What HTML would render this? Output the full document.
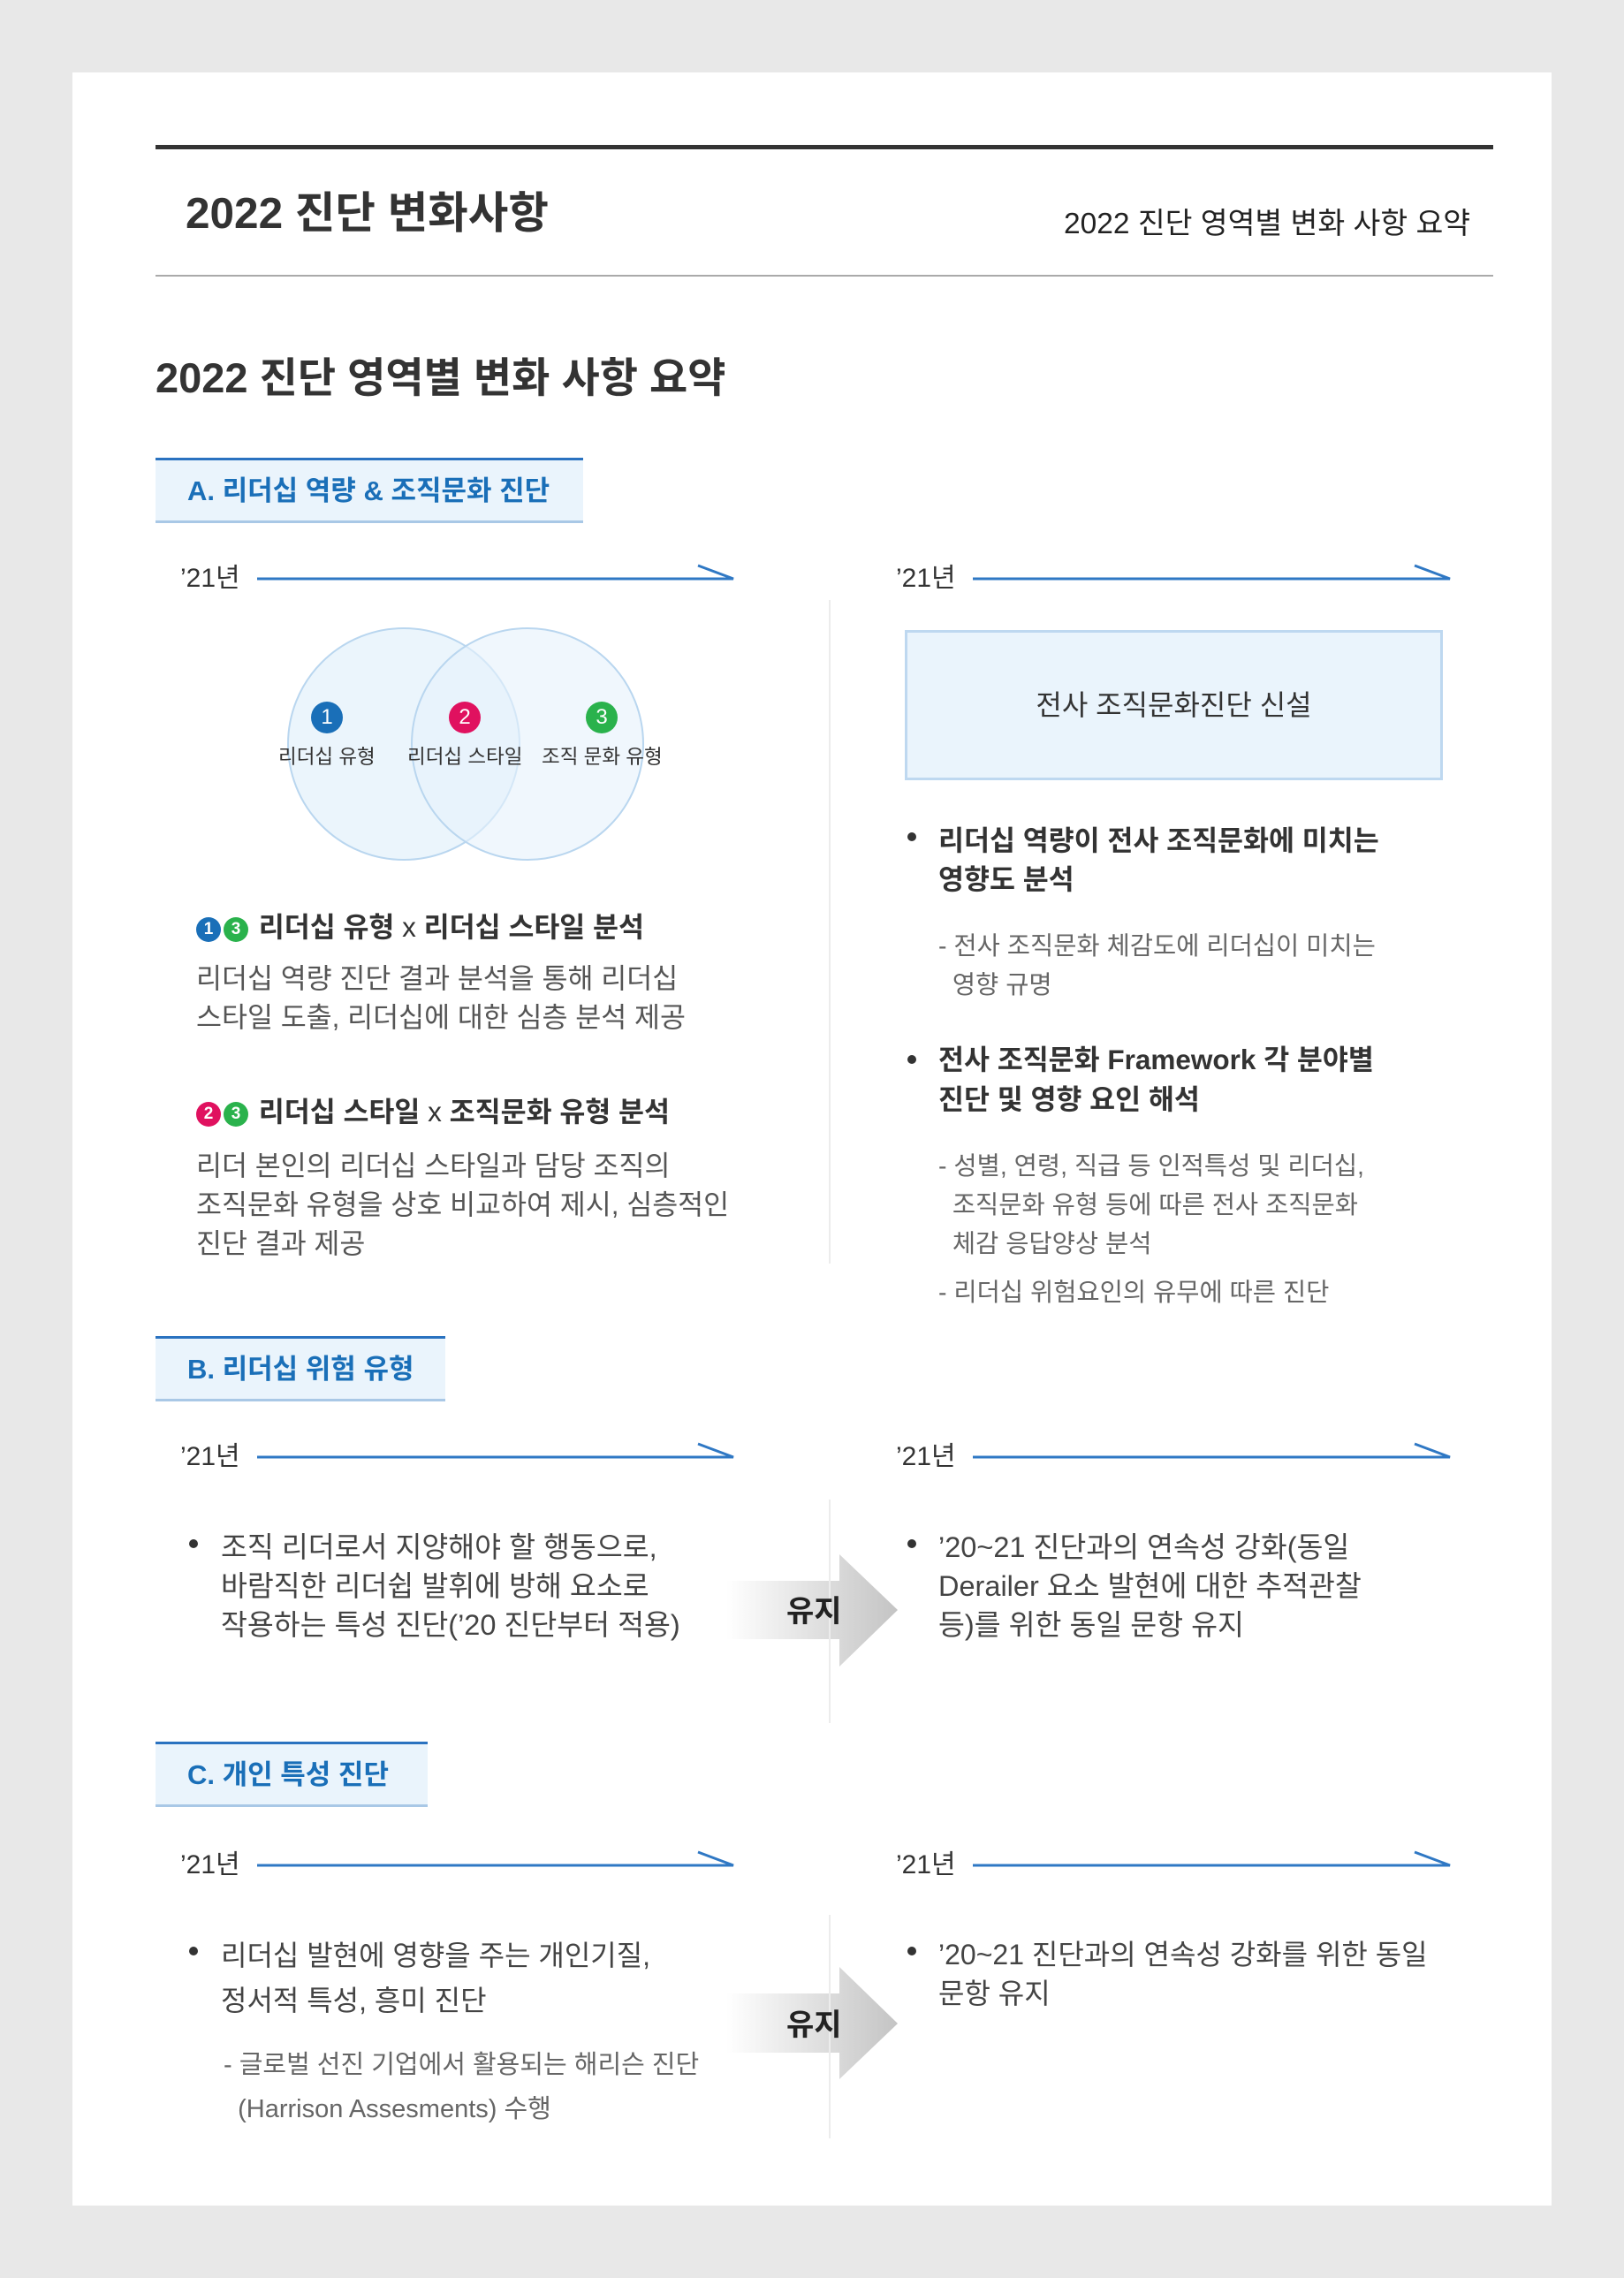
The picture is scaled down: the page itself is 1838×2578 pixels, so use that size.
<!DOCTYPE html>
<html><head><meta charset="utf-8">
<style>
*{margin:0;padding:0;box-sizing:border-box}
body{width:1838px;height:2578px;background:#e8e8e8;position:relative;overflow:hidden;font-family:"Liberation Sans","Noto Sans CJK KR",sans-serif;color:#333}
.card{position:absolute;left:82px;top:82px;width:1674px;height:2414px;background:#fff}
.a{position:absolute;white-space:nowrap}
.lab{position:absolute;left:176px;height:74px;background:#eaf4fc;border-top:3px solid #2a72c0;border-bottom:3px solid #a9c8e6;color:#1a6fb8;font-weight:bold;font-size:31px;line-height:70px;padding-left:36px}
.yr{position:absolute;font-size:30px;line-height:40px;color:#333}
.vd{position:absolute;left:938px;width:2px;background:#ececec}
.p{font-size:31.5px;color:#555;line-height:44px}
.h{font-size:31.5px;font-weight:bold;color:#333}
.s{font-size:28.5px;color:#666}
.dot{position:absolute;width:10px;height:10px;border-radius:50%;background:#333}
.badge{display:inline-block;width:28px;height:28px;border-radius:50%;color:#fff;font-size:19px;line-height:28px;text-align:center;font-weight:bold;vertical-align:3px;margin-right:3px}
</style></head><body>
<div class="card"></div>
<div class="a" style="left:176px;top:164px;width:1514px;height:5px;background:#333"></div>
<div class="a" style="left:210px;top:212px;font-size:49.5px;font-weight:bold;line-height:60px;color:#333">2022 진단 변화사항</div>
<div class="a" style="left:1204px;top:234px;font-size:33.5px;line-height:40px;color:#222">2022 진단 영역별 변화 사항 요약</div>
<div class="a" style="left:176px;top:311px;width:1514px;height:2px;background:#aaa"></div>
<div class="a" style="left:176px;top:398px;font-size:47px;font-weight:bold;line-height:60px;color:#333">2022 진단 영역별 변화 사항 요약</div>

<div class="lab" style="top:518px;width:484px">A. 리더십 역량 &amp; 조직문화 진단</div>
<div class="lab" style="top:1512px;width:328px">B. 리더십 위험 유형</div>
<div class="lab" style="top:1971px;width:308px">C. 개인 특성 진단</div>

<svg class="a" style="left:0;top:0" width="1838" height="2578">
<g stroke="#2f78c4" stroke-width="3" fill="none">
<path d="M291 655H830L790 640"/><path d="M1101 655H1641L1601 640"/>
<path d="M291 1649H830L790 1634"/><path d="M1101 1649H1641L1601 1634"/>
<path d="M291 2111H830L790 2096"/><path d="M1101 2111H1641L1601 2096"/>
</g>
<circle cx="457" cy="842" r="131" fill="#e6f2fb" fill-opacity="0.8" stroke="#b9d6ef" stroke-width="2"/>
<circle cx="597" cy="842" r="131" fill="#e6f2fb" fill-opacity="0.6" stroke="#b9d6ef" stroke-width="2"/>
<defs><linearGradient id="g" x1="0" x2="1"><stop offset="0" stop-color="#fff"/><stop offset="1" stop-color="#c4c4c4"/></linearGradient></defs>
<path d="M822 1789H950V1759L1016 1822L950 1886V1855H822Z" fill="url(#g)"/>
<path d="M822 2256H950V2226L1016 2290L950 2353V2323H822Z" fill="url(#g)"/>
</svg>

<div class="yr" style="left:204px;top:635px">’21년</div>
<div class="yr" style="left:1014px;top:635px">’21년</div>
<div class="yr" style="left:204px;top:1629px">’21년</div>
<div class="yr" style="left:1014px;top:1629px">’21년</div>
<div class="yr" style="left:204px;top:2091px">’21년</div>
<div class="yr" style="left:1014px;top:2091px">’21년</div>

<div class="vd" style="top:679px;height:751px"></div>
<div class="vd" style="top:1697px;height:253px"></div>
<div class="vd" style="top:2167px;height:253px"></div>

<div class="a" style="left:352px;top:794px;width:36px;height:36px;border-radius:50%;background:#1a6fb8;color:#fff;font-size:24px;line-height:36px;text-align:center">1</div>
<div class="a" style="left:508px;top:794px;width:36px;height:36px;border-radius:50%;background:#e0115f;color:#fff;font-size:24px;line-height:36px;text-align:center">2</div>
<div class="a" style="left:663px;top:794px;width:36px;height:36px;border-radius:50%;background:#2ab24c;color:#fff;font-size:24px;line-height:36px;text-align:center">3</div>
<div class="a" style="left:315px;top:842px;font-size:22.5px;line-height:30px">리더십 유형</div>
<div class="a" style="left:461px;top:842px;font-size:22.5px;line-height:30px">리더십 스타일</div>
<div class="a" style="left:613px;top:842px;font-size:22.5px;line-height:30px">조직 문화 유형</div>

<div class="a" style="left:1024px;top:713px;width:609px;height:170px;background:#eaf4fc;border:3px solid #bed8f0;font-size:32px;line-height:164px;text-align:center;color:#333">전사 조직문화진단 신설</div>

<div class="a h" style="left:222px;top:1028px;line-height:42px"><span class="badge" style="background:#1a6fb8">1</span><span class="badge" style="background:#2ab24c">3</span> 리더십 유형 <span style="font-weight:normal">x</span> 리더십 스타일 분석</div>
<div class="a p" style="left:222px;top:1085px">리더십 역량 진단 결과 분석을 통해 리더십<br>스타일 도출, 리더십에 대한 심층 분석 제공</div>
<div class="a h" style="left:222px;top:1237px;line-height:42px"><span class="badge" style="background:#e0115f">2</span><span class="badge" style="background:#2ab24c">3</span> 리더십 스타일 <span style="font-weight:normal">x</span> 조직문화 유형 분석</div>
<div class="a p" style="left:222px;top:1297px">리더 본인의 리더십 스타일과 담당 조직의<br>조직문화 유형을 상호 비교하여 제시, 심층적인<br>진단 결과 제공</div>

<div class="dot" style="left:1027px;top:942px"></div>
<div class="a h" style="left:1062px;top:929px;line-height:44px">리더십 역량이 전사 조직문화에 미치는<br>영향도 분석</div>
<div class="a s" style="left:1062px;top:1049px;line-height:44px">- 전사 조직문화 체감도에 리더십이 미치는<br>&nbsp;&nbsp;영향 규명</div>
<div class="dot" style="left:1027px;top:1194px"></div>
<div class="a h" style="left:1062px;top:1177px;line-height:45px">전사 조직문화 Framework 각 분야별<br>진단 및 영향 요인 해석</div>
<div class="a s" style="left:1062px;top:1298px;line-height:44px">- 성별, 연령, 직급 등 인적특성 및 리더십,<br>&nbsp;&nbsp;조직문화 유형 등에 따른 전사 조직문화<br>&nbsp;&nbsp;체감 응답양상 분석</div>
<div class="a s" style="left:1062px;top:1441px;line-height:44px">- 리더십 위험요인의 유무에 따른 진단</div>

<div class="dot" style="left:214px;top:1742px"></div>
<div class="a p" style="left:250px;top:1729px;color:#444;font-size:32.5px">조직 리더로서 지양해야 할 행동으로,<br>바람직한 리더쉽 발휘에 방해 요소로<br>작용하는 특성 진단(’20 진단부터 적용)</div>
<div class="a" style="left:890px;top:1804px;font-size:34px;font-weight:bold;line-height:40px;color:#222">유지</div>
<div class="dot" style="left:1027px;top:1742px"></div>
<div class="a p" style="left:1062px;top:1729px;color:#444;font-size:32.5px">’20~21 진단과의 연속성 강화(동일<br>Derailer 요소 발현에 대한 추적관찰<br>등)를 위한 동일 문항 유지</div>

<div class="dot" style="left:214px;top:2203px"></div>
<div class="a p" style="left:250px;top:2188px;line-height:51px;color:#444;font-size:32px">리더십 발현에 영향을 주는 개인기질,<br>정서적 특성, 흥미 진단</div>
<div class="a s" style="left:253px;top:2312px;line-height:50px;font-size:29px">- 글로벌 선진 기업에서 활용되는 해리슨 진단<br>&nbsp;&nbsp;(Harrison Assesments) 수행</div>
<div class="a" style="left:890px;top:2272px;font-size:34px;font-weight:bold;line-height:40px;color:#222">유지</div>
<div class="dot" style="left:1027px;top:2203px"></div>
<div class="a p" style="left:1062px;top:2190px;color:#444;font-size:32px">’20~21 진단과의 연속성 강화를 위한 동일<br>문항 유지</div>
</body></html>
